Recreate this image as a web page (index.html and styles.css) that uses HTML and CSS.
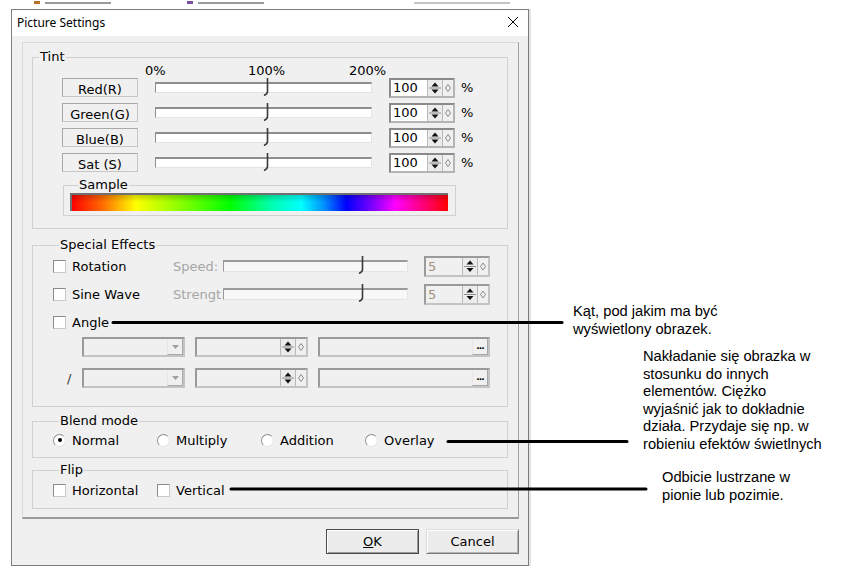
FILE: index.html
```html
<!DOCTYPE html>
<html lang="pl">
<head>
<meta charset="utf-8">
<title>Picture Settings</title>
<link rel="stylesheet" href="styles.css">
</head>
<body>
<div class="behind">
  <span class="bg-ico"></span><span class="bg-bit w1"></span>
  <span class="bg-ico b2"></span><span class="bg-bit w2"></span>
  <span class="bg-bit w3"></span>
</div>
<div class="window">
  <div class="titlebar">
    <span class="title">Picture Settings</span>
    <svg class="close" width="10" height="10" viewBox="0 0 10 10"><path d="M0 0L10 10M10 0L0 10" stroke="#000" stroke-width="1"/></svg>
  </div>
  <div class="client">
    <div class="panel">
      <fieldset class="group tint">
        <legend>Tint</legend>
        <div class="scale"><span class="s0">0%</span><span class="s1">100%</span><span class="s2">200%</span></div>
        <div class="trow">
          <span class="chan">Red(R)</span>
          <div class="track"><svg class="thumb" style="left:106px" width="8" height="18" viewBox="0 0 8 18"><path d="M5.5 0V13.5Q5.5 16 2 17.5" fill="none" stroke="#3a3a3a" stroke-width="1.6"/></svg></div>
          <div class="spin"><span class="val">100</span><span class="arr"><svg width="14" height="16" viewBox="0 0 14 16"><path d="M3.5 6.5L7 2.5L10.5 6.5Z"/><path d="M1 8H13" stroke="#8a8a8a"/><path d="M3.5 9.5H10.5L7 13.5Z"/></svg></span><span class="grip"><svg width="10" height="16" viewBox="0 0 10 16"><path d="M5 4.5L7.5 8L5 11.5L2.5 8Z" fill="none" stroke="#8a8a8a"/></svg></span></div>
          <span class="pct">%</span>
        </div>
        <div class="trow">
          <span class="chan">Green(G)</span>
          <div class="track"><svg class="thumb" style="left:106px" width="8" height="18" viewBox="0 0 8 18"><path d="M5.5 0V13.5Q5.5 16 2 17.5" fill="none" stroke="#3a3a3a" stroke-width="1.6"/></svg></div>
          <div class="spin"><span class="val">100</span><span class="arr"><svg width="14" height="16" viewBox="0 0 14 16"><path d="M3.5 6.5L7 2.5L10.5 6.5Z"/><path d="M1 8H13" stroke="#8a8a8a"/><path d="M3.5 9.5H10.5L7 13.5Z"/></svg></span><span class="grip"><svg width="10" height="16" viewBox="0 0 10 16"><path d="M5 4.5L7.5 8L5 11.5L2.5 8Z" fill="none" stroke="#8a8a8a"/></svg></span></div>
          <span class="pct">%</span>
        </div>
        <div class="trow">
          <span class="chan">Blue(B)</span>
          <div class="track"><svg class="thumb" style="left:106px" width="8" height="18" viewBox="0 0 8 18"><path d="M5.5 0V13.5Q5.5 16 2 17.5" fill="none" stroke="#3a3a3a" stroke-width="1.6"/></svg></div>
          <div class="spin"><span class="val">100</span><span class="arr"><svg width="14" height="16" viewBox="0 0 14 16"><path d="M3.5 6.5L7 2.5L10.5 6.5Z"/><path d="M1 8H13" stroke="#8a8a8a"/><path d="M3.5 9.5H10.5L7 13.5Z"/></svg></span><span class="grip"><svg width="10" height="16" viewBox="0 0 10 16"><path d="M5 4.5L7.5 8L5 11.5L2.5 8Z" fill="none" stroke="#8a8a8a"/></svg></span></div>
          <span class="pct">%</span>
        </div>
        <div class="trow">
          <span class="chan">Sat (S)</span>
          <div class="track"><svg class="thumb" style="left:106px" width="8" height="18" viewBox="0 0 8 18"><path d="M5.5 0V13.5Q5.5 16 2 17.5" fill="none" stroke="#3a3a3a" stroke-width="1.6"/></svg></div>
          <div class="spin"><span class="val">100</span><span class="arr"><svg width="14" height="16" viewBox="0 0 14 16"><path d="M3.5 6.5L7 2.5L10.5 6.5Z"/><path d="M1 8H13" stroke="#8a8a8a"/><path d="M3.5 9.5H10.5L7 13.5Z"/></svg></span><span class="grip"><svg width="10" height="16" viewBox="0 0 10 16"><path d="M5 4.5L7.5 8L5 11.5L2.5 8Z" fill="none" stroke="#8a8a8a"/></svg></span></div>
          <span class="pct">%</span>
        </div>
        <fieldset class="group sample">
          <legend>Sample</legend>
          <div class="hue"></div>
        </fieldset>
      </fieldset>

      <fieldset class="group fx">
        <legend>Special Effects</legend>
        <div class="serow">
          <label class="citem"><span class="cb"></span>Rotation</label>
          <span class="dlabel">Speed:</span>
          <div class="track dis"><svg class="thumb" style="left:133px" width="8" height="18" viewBox="0 0 8 18"><path d="M5.5 0V13.5Q5.5 16 2 17.5" fill="none" stroke="#3a3a3a" stroke-width="1.6"/></svg></div>
          <div class="spin dis"><span class="val">5</span><span class="arr"><svg width="14" height="17" viewBox="0 0 14 17"><path d="M3.5 6.5L7 2.5L10.5 6.5Z"/><path d="M1 8.5H13" stroke="#8a8a8a"/><path d="M3.5 10H10.5L7 14Z"/></svg></span><span class="grip"><svg width="10" height="17" viewBox="0 0 10 17"><path d="M5 5L7.5 8.5L5 12L2.5 8.5Z" fill="none" stroke="#8a8a8a"/></svg></span></div>
        </div>
        <div class="serow">
          <label class="citem"><span class="cb"></span>Sine Wave</label>
          <span class="dlabel">Strengt</span>
          <div class="track dis"><svg class="thumb" style="left:133px" width="8" height="18" viewBox="0 0 8 18"><path d="M5.5 0V13.5Q5.5 16 2 17.5" fill="none" stroke="#3a3a3a" stroke-width="1.6"/></svg></div>
          <div class="spin dis"><span class="val">5</span><span class="arr"><svg width="14" height="17" viewBox="0 0 14 17"><path d="M3.5 6.5L7 2.5L10.5 6.5Z"/><path d="M1 8.5H13" stroke="#8a8a8a"/><path d="M3.5 10H10.5L7 14Z"/></svg></span><span class="grip"><svg width="10" height="17" viewBox="0 0 10 17"><path d="M5 5L7.5 8.5L5 12L2.5 8.5Z" fill="none" stroke="#8a8a8a"/></svg></span></div>
        </div>
        <div class="serow">
          <label class="citem"><span class="cb"></span>Angle</label>
        </div>
        <div class="crow first">
          <span class="lead"></span>
          <div class="combo"><span class="drop"><svg width="7" height="4" viewBox="0 0 7 4"><path d="M0 0H7L3.5 4Z" fill="#a0a0a0"/></svg></span></div>
          <div class="spin dis wide"><span class="val"></span><span class="arr"><svg width="14" height="16" viewBox="0 0 14 16"><path d="M3.5 6.5L7 2.5L10.5 6.5Z"/><path d="M1 8H13" stroke="#8a8a8a"/><path d="M3.5 9.5H10.5L7 13.5Z"/></svg></span><span class="grip"><svg width="10" height="16" viewBox="0 0 10 16"><path d="M5 4.5L7.5 8L5 11.5L2.5 8Z" fill="none" stroke="#8a8a8a"/></svg></span></div>
          <div class="ell"><span class="ellbtn">...</span></div>
        </div>
        <div class="crow second">
          <span class="lead"><span class="slash">/</span></span>
          <div class="combo"><span class="drop"><svg width="7" height="4" viewBox="0 0 7 4"><path d="M0 0H7L3.5 4Z" fill="#a0a0a0"/></svg></span></div>
          <div class="spin dis wide"><span class="val"></span><span class="arr"><svg width="14" height="16" viewBox="0 0 14 16"><path d="M3.5 6.5L7 2.5L10.5 6.5Z"/><path d="M1 8H13" stroke="#8a8a8a"/><path d="M3.5 9.5H10.5L7 13.5Z"/></svg></span><span class="grip"><svg width="10" height="16" viewBox="0 0 10 16"><path d="M5 4.5L7.5 8L5 11.5L2.5 8Z" fill="none" stroke="#8a8a8a"/></svg></span></div>
          <div class="ell"><span class="ellbtn">...</span></div>
        </div>
      </fieldset>

      <fieldset class="group blend">
        <legend>Blend mode</legend>
        <div class="orow">
          <label class="ritem"><span class="rb on"></span>Normal</label>
          <label class="ritem"><span class="rb"></span>Multiply</label>
          <label class="ritem"><span class="rb"></span>Addition</label>
          <label class="ritem"><span class="rb"></span>Overlay</label>
        </div>
      </fieldset>

      <fieldset class="group flip">
        <legend>Flip</legend>
        <div class="orow">
          <label class="ritem"><span class="cb"></span>Horizontal</label>
          <label class="ritem"><span class="cb"></span>Vertical</label>
        </div>
      </fieldset>
    </div>
    <div class="buttons">
      <button class="btn def"><u>O</u>K</button>
      <button class="btn">Cancel</button>
    </div>
  </div>
</div>

<div class="notes">
  <svg class="leaders" width="851" height="570" viewBox="0 0 851 570">
    <g stroke="#000" stroke-width="3" stroke-linecap="round" fill="none">
      <path d="M113 322.5H562"/>
      <path d="M448 441.5H627"/>
      <path d="M231 489H646"/>
    </g>
  </svg>
  <p class="note n1">Kąt, pod jakim ma być<br>wyświetlony obrazek.</p>
  <p class="note n2">Nakładanie się obrazka w<br>stosunku do innych<br>elementów. Ciężko<br>wyjaśnić jak to dokładnie<br>działa. Przydaje się np. w<br>robieniu efektów świetlnych</p>
  <p class="note n3">Odbicie lustrzane w<br>pionie lub pozimie.</p>
</div>
</body>
</html>
```

FILE: styles.css
```css
* { box-sizing: border-box; }
html, body { margin: 0; padding: 0; }
body {
  width: 851px;
  height: 570px;
  overflow: hidden;
  position: relative;
  background: #fff;
  font-family: "DejaVu Sans", sans-serif;
  font-size: 13px;
  color: #000;
}

/* sliver of the application behind the dialog */
.behind {
  height: 9px;
  display: flex;
  align-items: flex-start;
  padding-top: 1px;
}
.bg-ico { width: 6px; height: 3px; background: #b8722e; margin: 0 5px 0 34px; }
.bg-ico.b2 { background: #7a4fa0; margin-left: 76px; }
.bg-bit { height: 2px; background: #9a9a9a; margin-top: 1px; }
.bg-bit.w1 { width: 66px; }
.bg-bit.w2 { width: 66px; }
.bg-bit.w3 { width: 96px; margin-left: 150px; background: #c4c4c4; }

/* window */
.window {
  margin-left: 11px;
  width: 518px;
  height: 557px;
  border: 1px solid #7c7c7c;
  background: #f0f0f0;
  display: flex;
  flex-direction: column;
  box-shadow: 2px 0 0 #e4e4e4;
}
.titlebar {
  height: 26px;
  background: #fff;
  display: flex;
  align-items: center;
  justify-content: space-between;
  padding: 0 10px 2px 5px;
  flex: none;
}
.title { font-family: "Noto Sans", sans-serif; font-size: 12px; }
.close { display: block; }

.client {
  flex: 1;
  display: flex;
  flex-direction: column;
  padding: 6px 9px 0 10px;
}
.panel {
  border-top: 1px solid #dadada;
  border-left: 1px solid #dadada;
  border-right: 1px solid #a0a0a0;
  border-bottom: 2px solid #9a9a9a;
  padding: 7px 10px 8px 9px;
}

/* group boxes */
fieldset.group {
  margin: 0;
  padding: 0;
  border: 1px solid #d0d0d0;
  min-width: 0;
}
fieldset.group > legend {
  padding: 0 1px;
  margin-left: 6px;
  line-height: 14px;
  font-size: 13px;
}

.tint { padding-bottom: 12px !important; }
.scale {
  display: flex;
  height: 10px;
  margin-top: 1px;
  line-height: 12px;
  padding-left: 112px;
}
.scale .s0 { width: 103px; }
.scale .s1 { width: 101px; }

.trow {
  display: flex;
  align-items: center;
  height: 25px;
  padding-left: 29px;
}
.chan {
  width: 76px;
  height: 19px;
  border: 1px solid;
  border-color: #a8a8a8 #c6c6c6 #c6c6c6 #a8a8a8;
  text-align: center;
  line-height: 16px;
  padding-top: 3px;
  overflow: hidden;
  white-space: nowrap;
}
.track {
  position: relative;
  width: 217px;
  height: 11px;
  margin-left: 17px;
  background: #fff;
  border-top: 2px solid #8e8e8e;
  border-left: 1px solid #8e8e8e;
  border-right: 1px solid #e4e4e4;
  border-bottom: 1px solid #e4e4e4;
}
.thumb { position: absolute; top: -6px; display: block; }

.spin {
  display: flex;
  width: 66px;
  height: 20px;
  margin-left: 17px;
  border: 2px solid;
  border-color: #8a8a8a #b4b4b4 #b4b4b4 #8a8a8a;
  background: #fff;
}
.spin .val {
  flex: 1;
  padding-left: 2px;
  line-height: 16px;
  font-size: 13px;
}
.spin .arr {
  width: 15px;
  flex: none;
  background: #ececec;
  border-left: 1px solid #b8b8b8;
  display: flex;
  align-items: center;
}
.spin .arr svg { display: block; fill: #111; }
.spin .grip {
  width: 11px;
  flex: none;
  background: #f0f0f0;
  border-left: 1px solid #b8b8b8;
  display: flex;
  align-items: center;
}
.spin .grip svg { display: block; }
.pct { margin-left: 6px; }

.sample {
  width: 393px;
  margin: 3px 0 0 30px !important;
  padding: 1px 0 4px 6px !important;
}
.sample > legend { margin-left: 8px !important; }
.hue {
  width: 378px;
  height: 18px;
  border-top: 2px solid #707070;
  border-left: 2px solid #707070;
  background:
    linear-gradient(to bottom, rgba(0,0,0,0.18), rgba(0,0,0,0) 45%),
    linear-gradient(to right, #ff0000 0%, #ff6a00 8%, #ffff00 17%, #7dff00 30%, #00ff00 42%, #00ffb0 53%, #00ffff 61%, #0090ff 67%, #0000ff 73%, #8000ff 80%, #ff00ff 86%, #ff0080 93%, #ff0000 100%);
}

/* special effects */
.fx { margin-top: 9px !important; padding: 0 0 18px 20px !important; }
.serow { display: flex; align-items: center; height: 28px; }
.citem { display: flex; align-items: center; gap: 6px; width: 120px; }
.cb {
  flex: none;
  width: 13px;
  height: 13px;
  background: #fff;
  border: 1px solid;
  border-color: #8a8a8a #c8c8c8 #c8c8c8 #8a8a8a;
}
.dlabel {
  width: 50px;
  color: #a6a6a6;
  white-space: nowrap;
}
.track.dis { width: 185px; height: 12px; margin-left: 0; background: #f8f8f8; border-top-color: #9a9a9a; border-left-color: #9a9a9a; }
.spin.dis { margin-left: 16px; height: 21px; background: #f0f0f0; border-color: #9a9a9a #c4c4c4 #c4c4c4 #9a9a9a; }
.spin.dis .val { color: #a3917f; line-height: 17px; }

.crow { display: flex; align-items: center; height: 20px; }
.crow.first { margin-top: 1px; }
.crow.second { margin-top: 11px; }
.lead { width: 29px; flex: none; }
.slash { padding-left: 14px; color: #333; }
.combo {
  width: 103px;
  height: 20px;
  display: flex;
  justify-content: flex-end;
  border: 2px solid;
  border-color: #9a9a9a #c4c4c4 #c4c4c4 #9a9a9a;
  background: #f0f0f0;
}
.drop {
  width: 16px;
  display: flex;
  align-items: center;
  justify-content: center;
  border-left: 1px solid #e6e6e6;
  border-right: 1px solid #a8a8a8;
  border-bottom: 1px solid #a8a8a8;
}
.drop svg { display: block; }
.spin.wide { width: 113px; height: 20px; margin-left: 10px; }
.ell {
  width: 172px;
  height: 20px;
  margin-left: 10px;
  display: flex;
  justify-content: flex-end;
  border: 2px solid;
  border-color: #9a9a9a #c4c4c4 #c4c4c4 #9a9a9a;
  background: #f0f0f0;
}
.ellbtn {
  width: 16px;
  border-left: 1px solid #e6e6e6;
  border-right: 1px solid #a8a8a8;
  border-bottom: 1px solid #a8a8a8;
  font-size: 9px;
  font-weight: bold;
  line-height: 14px;
  text-align: center;
  letter-spacing: -1px;
}

/* blend + flip */
.blend { margin-top: 7px !important; padding: 0 0 5px 20px !important; }
.flip { margin-top: 5px !important; padding: 0 0 5px 20px !important; }
.orow { display: flex; align-items: center; height: 24px; }
.flip .orow { height: 26px; }
.ritem { display: flex; align-items: center; gap: 6px; width: 104px; }
.rb {
  flex: none;
  width: 13px;
  height: 13px;
  border-radius: 50%;
  background: #fff;
  border: 1px solid;
  border-color: #8e8e8e #e2e2e2 #e2e2e2 #8e8e8e;
  display: flex;
  align-items: center;
  justify-content: center;
}
.rb.on::after {
  content: "";
  width: 4px;
  height: 4px;
  border-radius: 50%;
  background: #000;
}

/* buttons */
.buttons {
  display: flex;
  justify-content: flex-end;
  gap: 7px;
  margin-top: 10px;
}
.btn {
  width: 93px;
  height: 25px;
  margin: 0;
  padding: 0;
  font-family: "DejaVu Sans", sans-serif;
  font-size: 13px;
  color: #000;
  background: #ececec;
  border: 1px solid;
  border-color: #dcdcdc #7a7a7a #7a7a7a #dcdcdc;
  box-shadow: inset 1px 1px 0 #fff, inset -1px -1px 0 #b4b4b4;
}
.btn.def {
  border-color: #4a4a4a;
  box-shadow: inset 1px 1px 0 #fff, inset -1px -1px 0 #9a9a9a;
}

/* annotations */
.notes { position: absolute; left: 0; top: 0; width: 851px; height: 570px; pointer-events: none; }
.leaders { position: absolute; left: 0; top: 0; }
.note {
  position: absolute;
  margin: 0;
  font-family: "Liberation Sans", Arial, sans-serif;
  font-size: 14.7px;
  line-height: 17.5px;
  color: #000;
  white-space: nowrap;
}
.n1 { left: 573px; top: 303px; }
.n2 { left: 643px; top: 348px; }
.n3 { left: 662px; top: 469px; }
```
